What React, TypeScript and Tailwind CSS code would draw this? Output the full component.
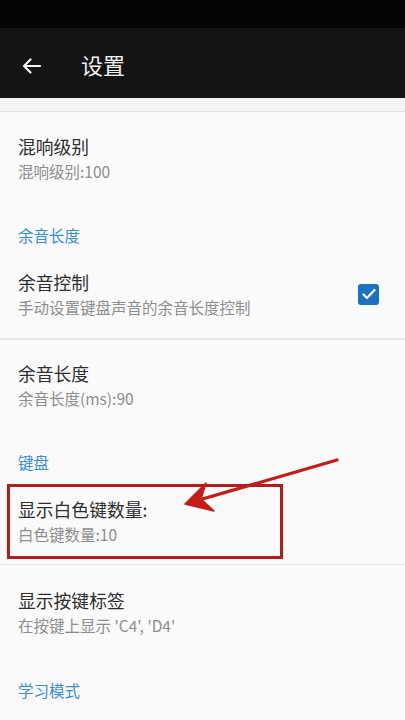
import React from "react";

const font = { fontFamily: '"Noto Sans CJK SC", "Noto Sans", sans-serif' };

function Title({ children }: { children: React.ReactNode }) {
  return <div className="text-[17.8px] leading-[24px] text-[#2e2e2e]">{children}</div>;
}
function Sub({ children }: { children: React.ReactNode }) {
  return <div className="mt-[2px] text-[15.5px] leading-[22px] text-[#8e8e8e]">{children}</div>;
}
function Header({ children, mt }: { children: React.ReactNode; mt: string }) {
  return <div className={`${mt} px-[18px] text-[15.5px] leading-[20px] text-[#3a8ed0]`}>{children}</div>;
}

export default function App() {
  return (
    <div className="relative w-[405px] h-[720px] overflow-hidden bg-[#fafafa]" style={font}>
      <div className="h-[28px] bg-[#050505]" />
      <div className="h-[70px] bg-[#141414] flex items-center">
        <svg className="ml-[22px] mt-[5px]" width="19" height="16" viewBox="0 0 19 16" fill="none" stroke="#f2f2f2" strokeWidth="2.2" strokeLinecap="round" strokeLinejoin="round">
          <path d="M18 8H2M8.5 1.5L2 8l6.5 6.5" />
        </svg>
        <div className="ml-[40px] mt-[3px] text-[22px] text-[#f2f2f2]">设置</div>
      </div>
      <div className="h-[14px] bg-[#f4f4f4] border-b border-[#e3e3e3]" />

      <div className="px-[18px] pt-[22px]">
        <Title>混响级别</Title>
        <Sub>混响级别:100</Sub>
      </div>

      <Header mt="mt-[43px]">余音长度</Header>

      <div className="mt-[25px] pl-[18px] pr-[26px] flex items-center">
        <div className="flex-1">
          <Title>余音控制</Title>
          <Sub>手动设置键盘声音的余音长度控制</Sub>
        </div>
        <div className="w-[21px] h-[21px] rounded-[3px] bg-[#1b72c4] flex items-center justify-center">
          <svg width="14" height="12" viewBox="0 0 14 12" fill="none" stroke="#fff" strokeWidth="2.2" strokeLinecap="round" strokeLinejoin="round">
            <path d="M1.5 6.5l3.5 3.5 7.5-8" />
          </svg>
        </div>
      </div>
      <div className="mt-[20px] h-[2px] bg-[#e6e6e6]" />

      <div className="px-[18px] pt-[21px]">
        <Title>余音长度</Title>
        <Sub>余音长度(ms):90</Sub>
      </div>

      <Header mt="mt-[43px]">键盘</Header>

      <div className="relative mt-[25px] px-[18px]">
        <Title>显示白色键数量:</Title>
        <Sub>白色键数量:10</Sub>
        <div className="absolute left-[7px] top-[-13px] w-[276px] h-[75px] border-[3px] border-[#b51b1b]" />
      </div>
      <div className="mt-[19px] h-[1px] bg-[#e6e6e6]" />

      <div className="px-[18px] pt-[23px]">
        <Title>显示按键标签</Title>
        <Sub>在按键上显示 'C4', 'D4'</Sub>
      </div>

      <Header mt="mt-[44px]">学习模式</Header>

      <svg className="absolute left-0 top-0 pointer-events-none" width="405" height="720" viewBox="0 0 405 720">
        <line x1="337" y1="460" x2="192" y2="502" stroke="#c41c16" strokeWidth="3.2" strokeLinecap="round" />
        <path d="M185 504 L206 483 L201 499 L214 511 Z" fill="#c41c16" stroke="#c41c16" strokeWidth="1.5" strokeLinejoin="round" />
      </svg>
    </div>
  );
}
